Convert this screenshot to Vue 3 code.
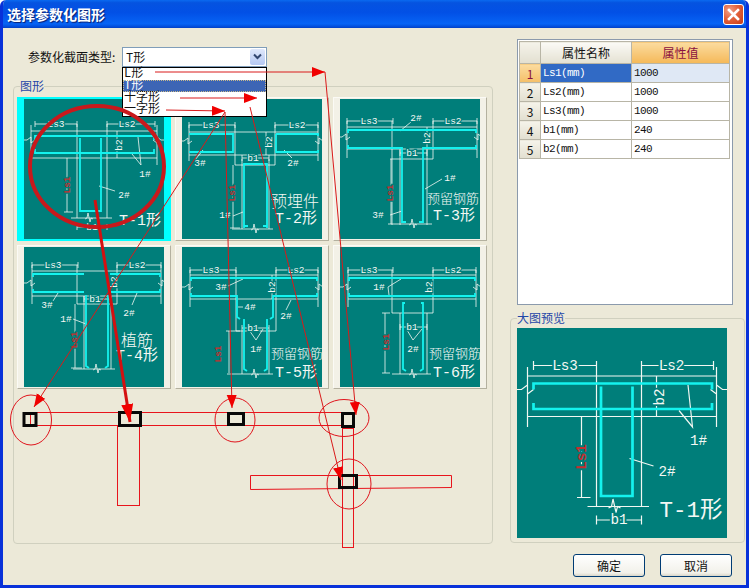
<template>
  <div class="window">
    <header class="titlebar">
      <span class="title">选择参数化图形</span>
      <button class="close" aria-label="关闭">
        <svg width="13" height="13" viewBox="0 0 13 13">
          <path d="M2 2l9 9M11 2l-9 9" stroke="#fff" stroke-width="2.6" stroke-linecap="square" />
        </svg>
      </button>
    </header>

    <div class="content">
      <section class="left">
        <div class="type-row">
          <label class="type-label">参数化截面类型:</label>
          <div class="combo">
            <span class="combo-value">T形</span>
            <span class="combo-btn">
              <svg width="9" height="7" viewBox="0 0 9 7">
                <path d="M1 1.5l3.5 3.5L8 1.5" fill="none" stroke="#31466f" stroke-width="2" />
              </svg>
            </span>
            <ul class="combo-list">
              <li v-for="o in options" :key="o" :class="{ active: o === 'T形' }">{{ o }}</li>
            </ul>
          </div>
        </div>

        <div class="group shapes">
          <span class="group-title">图形</span>
          <div class="cards">
            <div v-for="(d, i) in drawings" :key="i" class="card" :class="{ selected: i === 0 }">
              <svg class="sec" viewBox="0 0 140 140">
                <path class="ln" :d="d.white" />
                <path class="bar" :d="d.cyan" />
                <text
                  v-for="t in d.texts"
                  :key="t.s + t.x"
                  :class="t.c"
                  :x="t.x"
                  :y="t.y"
                  :transform="t.c === 'rot' || t.c === 'red' ? `rotate(-90 ${t.x} ${t.y})` : null"
                >{{ t.s }}</text>
              </svg>
            </div>
          </div>
        </div>
      </section>

      <section class="right">
        <div class="grid-frame">
          <table class="props">
            <thead>
              <tr>
                <th class="idx"></th>
                <th class="name">属性名称</th>
                <th class="val">属性值</th>
              </tr>
            </thead>
            <tbody>
              <tr v-for="(r, i) in rows" :key="r.name" :class="{ current: i === 0 }">
                <td class="idx">{{ i + 1 }}</td>
                <td class="name">{{ r.name }}</td>
                <td class="val">{{ r.value }}</td>
              </tr>
            </tbody>
          </table>
        </div>

        <div class="group preview">
          <span class="group-title">大图预览</span>
          <svg class="sec big" viewBox="0 0 140 140">
            <path class="ln" :d="drawings[0].white" />
            <path class="bar" :d="drawings[0].cyan" />
            <text
              v-for="t in drawings[0].texts"
              :key="t.s + t.x"
              :class="t.c"
              :x="t.x"
              :y="t.y"
              :transform="t.c === 'rot' || t.c === 'red' ? `rotate(-90 ${t.x} ${t.y})` : null"
            >{{ t.s }}</text>
          </svg>
        </div>

        <div class="actions">
          <button class="btn">确定</button>
          <button class="btn">取消</button>
        </div>
      </section>
    </div>

    <!-- red markup someone drew over the dialog -->
    <svg class="markup" viewBox="0 0 749 588">
      <defs>
        <marker id="head" markerUnits="userSpaceOnUse" markerWidth="14" markerHeight="12" refX="13" refY="5" orient="auto">
          <path d="M0 0L13 5L0 10z" fill="#f00000" />
        </marker>
        <marker id="head-big" markerUnits="userSpaceOnUse" markerWidth="20" markerHeight="14" refX="18" refY="6" orient="auto">
          <path d="M0 0L18 6L0 12z" fill="#f00000" />
        </marker>
      </defs>

      <g class="thin">
        <rect x="30.5" y="412.5" width="324" height="13" stroke="#e8141c" />
        <rect x="117.5" y="425.5" width="22" height="80" stroke="#e8141c" />
        <rect x="342.5" y="428.5" width="11" height="119" stroke="#e8141c" />
        <path d="M250.5 475.5H451.5V487.5L250.5 489.5Z" stroke="#e8141c" />
        <ellipse cx="31" cy="420" rx="20.5" ry="25" />
        <ellipse cx="235" cy="420" rx="20" ry="22" />
        <ellipse cx="344" cy="418" rx="25" ry="18.5" />
        <ellipse cx="349" cy="484" rx="22" ry="25" />
      </g>

      <g class="boxes">
        <rect x="24" y="413.5" width="12" height="12" />
        <rect x="119.5" y="412.5" width="21" height="13" />
        <rect x="228.5" y="413.5" width="15" height="11" />
        <rect x="342.5" y="413.5" width="11" height="13" />
        <rect x="339.5" y="475.5" width="17" height="12" />
      </g>

      <g class="arrows">
        <path d="M155 72H325" marker-end="url(#head)" />
        <path d="M325 72L356 415" marker-end="url(#head)" />
        <path d="M180 98H257" marker-end="url(#head)" />
        <path d="M250 107L341 480" marker-end="url(#head)" />
        <path d="M166 110L225 111" marker-end="url(#head)" />
        <path d="M225 112L232 408" marker-end="url(#head)" />
        <path d="M225 112L34 407" marker-end="url(#head)" />
      </g>

      <ellipse class="ring" cx="97" cy="166.5" rx="67" ry="60.5" />
      <path class="thick" d="M95 200L130 422" marker-end="url(#head-big)" />
    </svg>
  </div>
</template>

<script setup>
const options = ['L形', 'T形', '十字形', '一字形']

const rows = [
  { name: 'Ls1(mm)', value: '1000' },
  { name: 'Ls2(mm)', value: '1000' },
  { name: 'Ls3(mm)', value: '1000' },
  { name: 'b1(mm)', value: '240' },
  { name: 'b2(mm)', value: '240' },
]

// small path helpers, all in the 140x140 space of a thumbnail
const dim = (x1, x2, y) => `M${x1} ${y}H${x2}M${x1} ${y - 3}v6M${x2} ${y - 3}v6`
const breakH = (x, y) => `M${x - 4} ${y + 1}l2 -1l1 -5l2 9l1 -4l2 1`
const endL = (x, y) => `M${x - 7} ${y}h3l4 -3v6l4 -3`
const endR = (x, y) => `M${x + 7} ${y}h-3l-4 -3v6l-4 -3`

const txt = (s, x, y, c = 'dim') => ({ s, x, y, c })

const drawings = [
  {
    // T-1
    white: [
      dim(11, 53, 25), dim(83, 131, 25),
      'M7 26V66M133 26V66M7 32H133M7 59H133M53 25V119M83 25V119M47 119H88',
      breakH(65, 119), dim(53, 83, 128), 'M93 32V59M43 59V113M40 113H49',
      'M114 38L117 66L108 55M75 87L91 92',
      endL(7, 41), endR(133, 41),
    ].join(''),
    cyan: 'M11 41V37H130V41M11 50V54H130V50M56 39V112H77V39',
    texts: [
      txt('Ls3', 32, 25), txt('Ls2', 103, 25), txt('b1', 68, 128), txt('b2', 95, 46, 'rot'),
      txt('Ls1', 43, 86, 'red'), txt('1#', 121, 75), txt('2#', 100, 96), txt('T-1形', 116, 122, 'big'),
    ],
  },
  {
    // T-2
    white: [
      dim(7, 53, 26), dim(93, 136, 26),
      'M7 26V62M136 26V62M7 33H136M7 56H136M53 26V66M93 26V66M53 66H93M60 60V130M87 60V130M50 130H91',
      breakH(73, 130), dim(60, 87, 59), 'M84 33V56M51 66V129M48 129H58',
      'M21 51L13 61M102 51L110 59M61 113L51 117',
      endL(6, 42), endR(137, 42),
    ].join(''),
    cyan: 'M8 36V35H51V53H8V52M94 35H136V37M94 35V53H136V51M62 129V65H85V129M62 127H66M85 127H81',
    texts: [
      txt('Ls3', 29, 26), txt('Ls2', 115, 26), txt('b1', 71, 59), txt('b2', 87, 43, 'rot'),
      txt('Ls1', 50, 94, 'red'), txt('3#', 18, 64), txt('2#', 111, 64), txt('1#', 43, 116),
      txt('预埋件', 113, 101, 'cjk'), txt('T-2形', 114, 120, 'big'),
    ],
  },
  {
    // T-3
    white: [
      dim(7, 53, 22), dim(93, 137, 22),
      'M7 22V59M137 22V59M7 28H137M7 50H137M52 22V126M93 22V60M50 60H93M60 50V126M87 50V126M48 125H92',
      breakH(73, 125), dim(60, 87, 54), 'M87 28V50M51 60V125',
      'M60 32L71 23M85 90L102 80M62 112L50 116',
      endL(6, 38), endR(138, 38),
    ].join(''),
    cyan: 'M8 34V31H136V34M8 46V49H62V123H66M136 46V49H83V123H79',
    texts: [
      txt('Ls3', 29, 22), txt('Ls2', 113, 22), txt('b1', 72, 54), txt('b2', 87, 39, 'rot'),
      txt('Ls1', 50, 94, 'red'), txt('2#', 76, 19), txt('1#', 110, 79), txt('3#', 38, 116),
      txt('预留钢筋', 113, 98, 'cjk-s'), txt('T-3形', 114, 117, 'big'),
    ],
  },
  {
    // T-4
    white: [
      dim(8, 54, 18), dim(93, 137, 18),
      'M8 18V57M137 18V57M8 24H137M8 49H137M53 18V57M93 18V57M53 57H93M60 49V122M87 49V122M49 122H91',
      breakH(73, 122), dim(60, 87, 52), 'M51 57V121M47 121H58',
      'M34 46L29 54M113 46L108 58M49 72L62 77',
      endL(7, 36), endR(138, 36),
    ].join(''),
    cyan: 'M9 30V27H60M136 30V27H86M9 42V45H60M136 42V45H87M62 48V119L65 121M84 48V119L81 121',
    texts: [
      txt('Ls3', 29, 18), txt('Ls2', 113, 18), txt('b1', 71, 52), txt('b2', 90, 35, 'rot'),
      txt('Ls1', 50, 93, 'red'), txt('3#', 23, 58), txt('2#', 105, 66), txt('1#', 42, 72),
      txt('植筋', 113, 92, 'cjk'), txt('T-4形', 113, 109, 'big'),
    ],
  },
  {
    // T-5
    white: [
      dim(8, 54, 23), dim(94, 136, 23),
      'M8 23V60M136 23V60M8 28H136M8 52H136M54 23V84M94 23V84M54 84H94M60 84V127M87 84V127M45 127H91',
      breakH(73, 127), dim(60, 87, 81), 'M90 28V52M47 84V126M44 84H58',
      'M67 83L74 93L81 82M61 32L46 39M56 60H61M109 53L104 63',
      endL(7, 40), endR(137, 40),
    ].join(''),
    cyan: 'M9 34V31H135V34M9 46V49H55V70L58 72M135 46V49H91V70L88 72M62 72V122L65 124M85 72V122L82 124',
    texts: [
      txt('Ls3', 29, 23), txt('Ls2', 114, 23), txt('b1', 71, 81), txt('b2', 90, 40, 'rot'),
      txt('Ls1', 36, 107, 'red'), txt('3#', 39, 40), txt('4#', 68, 60), txt('2#', 104, 69), txt('1#', 74, 102),
      txt('预留钢筋', 115, 105, 'cjk-s'), txt('T-5形', 114, 126, 'big'),
    ],
  },
  {
    // T-6
    white: [
      dim(8, 53, 23), dim(93, 136, 23),
      'M8 23V60M136 23V60M8 28H136M8 52H136M52 23V66M93 23V66M52 66H93M60 66V127M87 66V127M52 127H91',
      breakH(73, 127), dim(60, 87, 80), 'M45 66V126M42 66H50M42 126H50',
      'M67 83L73 93L82 82M61 32L48 40L49 48',
      endL(7, 40), endR(137, 40),
    ].join(''),
    cyan: 'M9 34V31H135V34M9 46V49H135V46M65 56H63V122L66 124M81 56H83V122L80 124',
    texts: [
      txt('Ls3', 29, 23), txt('Ls2', 113, 23), txt('b1', 72, 80), txt('b2', 89, 40, 'rot'),
      txt('Ls1', 46, 95, 'red'), txt('1#', 39, 40), txt('2#', 73, 102),
      txt('预留钢筋', 115, 105, 'cjk-s'), txt('T-6形', 114, 126, 'big'),
    ],
  },
]
</script>

<style scoped>
.window {
  position: relative;
  width: 749px;
  height: 588px;
  box-sizing: border-box;
  display: flex;
  flex-direction: column;
  background: #ece9d8;
  border: solid #0831d9;
  border-width: 0 3px 3px;
  border-radius: 6px 6px 0 0;
  font-family: "Noto Sans CJK SC", "Liberation Sans", sans-serif;
  font-size: 12px;
  color: #111;
  overflow: hidden;
}

.titlebar {
  flex: none;
  height: 28px;
  margin: 0 -3px;
  padding: 0 5px 0 7px;
  display: flex;
  align-items: center;
  justify-content: space-between;
  background: linear-gradient(180deg, #0a6af0 0, #0553e0 10%, #0250e6 45%, #0764f5 85%, #0350de 94%, #0340c4 100%);
}

.title {
  color: #fff;
  font-size: 14px;
  font-weight: 700;
  text-shadow: 1px 1px 1px #0a1f70;
}

.close {
  width: 21px;
  height: 21px;
  padding: 0;
  display: flex;
  align-items: center;
  justify-content: center;
  border: 1px solid #fff;
  border-radius: 3px;
  background: radial-gradient(circle at 30% 30%, #f0a088 0, #e2623c 45%, #c83a14 100%);
}

.content {
  flex: 1;
  display: grid;
  grid-template-columns: 480px 235px;
  column-gap: 17px;
  padding-left: 10px;
}

.left {
  padding-top: 19px;
}

.type-row {
  display: flex;
  align-items: center;
  height: 19px;
  margin: 0 0 20px 15px;
}

.type-label {
  width: 94px;
  white-space: nowrap;
}

.combo {
  position: relative;
  width: 145px;
  height: 20px;
  box-sizing: border-box;
  display: flex;
  align-items: center;
  justify-content: space-between;
  background: #fff;
  border: 1px solid #7f9db9;
  z-index: 1;
}

.combo-value {
  padding-left: 3px;
  font-family: "Liberation Mono", "Noto Sans CJK SC", monospace;
}

.combo-btn {
  width: 15px;
  height: 16px;
  margin-right: 1px;
  display: flex;
  align-items: center;
  justify-content: center;
  border-radius: 2px;
  background: linear-gradient(180deg, #dfe8fb, #b5c8f2);
}

.combo-list {
  position: absolute;
  top: 19px;
  left: -1px;
  width: 145px;
  box-sizing: border-box;
  margin: 0;
  padding: 0;
  list-style: none;
  background: #fff;
  border: 1px solid #000;
  font-family: "Liberation Mono", "Noto Sans CJK SC", monospace;
  line-height: 12px;
}

.combo-list li {
  height: 12px;
  padding-left: 1px;
}

.combo-list li.active {
  background: #3d65b5;
  color: #fff;
  outline: 1px dotted #c9b98a;
  outline-offset: -1px;
}

.group {
  box-sizing: border-box;
  border: 1px solid #d0d0bf;
  border-radius: 4px;
}

.group-title {
  display: table;
  height: 14px;
  line-height: 14px;
  margin: -8px 0 0;
  background: #ece9d8;
  color: #1f46a8;
}

.shapes {
  height: 458px;
  padding-left: 3px;
}

.shapes .group-title {
  margin-left: 3px;
}

.cards {
  display: grid;
  grid-template-columns: repeat(3, 154px);
  grid-auto-rows: 144px;
  gap: 4px;
  margin-top: 4px;
}

.card {
  box-sizing: border-box;
  display: flex;
  justify-content: center;
  padding-top: 1px;
  background: #f3f1e7;
  border: 1px solid;
  border-color: #fbfaf5 #b4b19f #b4b19f #fbfaf5;
}

.card.selected {
  background: #00ffff;
  border-color: #00ffff;
}

.sec {
  display: block;
  width: 140px;
  height: 140px;
  background: #007e7a;
}

.sec.big {
  width: 210px;
  height: 210px;
  margin-top: 3px;
}

.ln {
  fill: none;
  stroke: #f2f7f2;
  stroke-width: 0.8;
}

.bar {
  fill: none;
  stroke: #14f2ee;
  stroke-width: 1.8;
}

text {
  text-anchor: middle;
  dominant-baseline: central;
  fill: #f4f8f4;
  font-family: "Liberation Mono", "Noto Sans CJK SC", monospace;
  font-size: 9.5px;
  paint-order: stroke;
  stroke: #007e7a;
  stroke-width: 2.5px;
}

text.red {
  fill: #c23030;
  font-weight: 700;
}

text.big {
  font-size: 15px;
  stroke: none;
}

text.cjk {
  font-size: 16px;
  font-family: "Noto Sans CJK SC", sans-serif;
  font-weight: 300;
  stroke: none;
}

text.cjk-s {
  font-size: 13px;
  font-family: "Noto Sans CJK SC", sans-serif;
  font-weight: 300;
  stroke: none;
}

.right {
  display: flex;
  flex-direction: column;
  padding-top: 11px;
}

.grid-frame {
  box-sizing: border-box;
  width: 216px;
  height: 266px;
  margin-left: 7px;
  padding: 1px 0 0 1px;
  background: #fff;
  border: 1px solid #8b9aac;
}

.props {
  width: 211px;
  table-layout: fixed;
  border-collapse: collapse;
  font-size: 12px;
}

.props th,
.props td {
  height: 18px;
  padding: 0 2px;
  border: 1px solid #b8b5a6;
  font-weight: 400;
  white-space: nowrap;
}

.props th {
  height: 21px;
  background: linear-gradient(180deg, #fbfaf6, #e4e1d2);
}

.props th.idx,
.props td.idx {
  width: 16px;
  text-align: center;
  background: linear-gradient(180deg, #f5f3ea, #e2dfd0);
}

.props th.name {
  width: 86px;
}

.props th.val {
  color: #8a1040;
  background: linear-gradient(180deg, #fbdca0, #f5b858);
}

.props td.name,
.props td.val {
  font-family: "Liberation Mono", monospace;
  font-size: 11px;
  letter-spacing: -0.6px;
}

.props tr.current td.idx {
  color: #8a1040;
  background: linear-gradient(180deg, #fbdca0, #f5bf68);
}

.props tr.current td.name {
  color: #fff;
  background: #316ac5;
}

.props tr.current td.val {
  background: #dfe8f5;
}

.preview {
  height: 225px;
  margin-top: 13px;
  padding-left: 6px;
}

.actions {
  display: flex;
  justify-content: flex-end;
  gap: 15px;
  margin-top: 11px;
  padding-right: 13px;
}

.btn {
  width: 72px;
  height: 23px;
  padding: 0;
  border: 1px solid #003c74;
  border-radius: 3px;
  background: linear-gradient(180deg, #ffffff, #f2f1ea 85%, #d9d6c8);
  font: inherit;
  color: #111;
}

.markup {
  position: absolute;
  top: 0;
  left: -3px;
  width: 749px;
  height: 588px;
  z-index: 2;
  pointer-events: none;
}

.thin {
  fill: none;
  stroke: #e0141c;
  stroke-width: 1;
}

.boxes {
  fill: none;
  stroke: #080808;
  stroke-width: 3;
}

.arrows {
  fill: none;
  stroke: #d91a1a;
  stroke-width: 1;
}

.ring {
  fill: none;
  stroke: #c8191c;
  stroke-width: 4;
}

.thick {
  fill: none;
  stroke: #d41010;
  stroke-width: 3;
}
</style>

<style>
html,
body {
  background: #fff;
}
</style>
